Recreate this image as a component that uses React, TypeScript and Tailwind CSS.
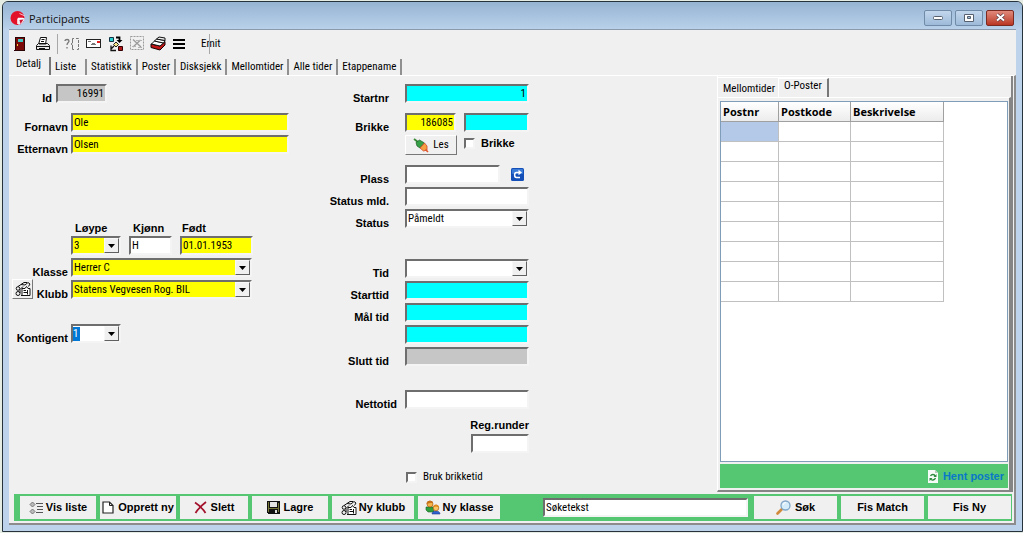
import React from "react";

const ui = "font-['Roboto_Condensed','Liberation_Sans_Narrow','Liberation_Sans',sans-serif] text-[11px] leading-[14px]";
const bold = "font-['Liberation_Sans',sans-serif] text-[11px] leading-[13px] font-bold";
const sunken =
  "border-2 border-t-[#6e6e6e] border-l-[#6e6e6e] border-r-[#f4f4f4] border-b-[#f4f4f4] outline-none rounded-none";

type Tone = "white" | "yellow" | "cyan" | "grey";
const tones: Record<Tone, string> = {
  white: "bg-white",
  yellow: "bg-[#ffff00]",
  cyan: "bg-[#00ffff]",
  grey: "bg-[#c6c6c6]",
};

function Field(props: { id: string; label?: string; tone?: Tone; value?: string; className?: string; right?: boolean }) {
  const { id, label, tone = "white", value = "", className = "w-full", right } = props;
  return (
    <input
      id={id}
      aria-label={label}
      defaultValue={value}
      className={`${ui} ${sunken} ${tones[tone]} h-[19px] min-w-0 px-px text-black ${right ? "text-right" : ""} ${className}`}
    />
  );
}

function Arrow() {
  return (
    <span className="pointer-events-none flex h-[15px] w-[15px] shrink-0 items-center justify-center border border-t-[#f8f8f8] border-l-[#f8f8f8] border-r-[#606060] border-b-[#606060] bg-[#f0f0f0]">
      <svg width="7" height="4" viewBox="0 0 7 4" aria-hidden="true">
        <path d="M0 0h7L3.500 4z" fill="#000" />
      </svg>
    </span>
  );
}

function Combo(props: { id: string; tone?: Tone; value: string; className?: string }) {
  const { id, tone = "white", value, className = "w-full" } = props;
  return (
    <div className={`${sunken} ${tones[tone]} relative flex h-[19px] items-center ${className}`}>
      <select
        id={id}
        defaultValue={value}
        className={`${ui} h-[15px] min-w-0 flex-1 appearance-none bg-transparent pl-px text-black outline-none`}
      >
        <option>{value}</option>
      </select>
      <Arrow />
    </div>
  );
}

function Row(props: { id: string; label?: string; wide?: boolean; children: React.ReactNode }) {
  return (
    <div className="flex items-end gap-2">
      <div className={`flex w-[76px] shrink-0 justify-end ${props.wide ? "" : "pr-2"}`}>
        {props.label && (
          <label htmlFor={props.id} className={`${bold} translate-y-[2px] whitespace-nowrap`}>
            {props.label}
          </label>
        )}
      </div>
      {props.children}
    </div>
  );
}

function LeftRow(props: { id: string; label: string; icon?: React.ReactNode; children: React.ReactNode }) {
  return (
    <div className="flex items-end gap-[3px]">
      <div className={`flex h-[19px] w-14 shrink-0 items-end ${props.icon ? "justify-between" : "justify-end"}`}>
        {props.icon}
        <label htmlFor={props.id} className={`${bold} translate-y-[2px] whitespace-nowrap`}>
          {props.label}
        </label>
      </div>
      {props.children}
    </div>
  );
}

function LogoIcon() {
  return (
    <svg width="16" height="16" viewBox="0 0 16 16" aria-hidden="true">
      <circle cx="7.500" cy="8" r="7" fill="#e3122b" />
      <path d="M8 8h6.500v2L12 13.500 8.500 15z" fill="#e8eef6" />
      <path d="M8 14V8.500M8 8.500h5" stroke="#fff" strokeWidth="1.500" />
      <path d="M9.500 10l4-.5-3 4.500z" fill="#d01530" />
      <path d="M9.500 3.500 15 6" stroke="#f7c6cc" strokeWidth="1" />
    </svg>
  );
}

function DoorIcon() {
  return (
    <svg width="12" height="16" viewBox="0 0 12 16" shapeRendering="crispEdges" aria-hidden="true">
      <path d="M1 1h10v14H1z" fill="#7a0a0a" />
      <path d="M1 1h10v1H1zM1 1h1v14H1zM10 1h1v14h-1zM0 14h11v1H0z" fill="#2b0505" />
      <path d="M4 3h5v3H4z" fill="#3fc9c4" />
      <path d="M3 8h1v2H3z" fill="#f0d040" />
    </svg>
  );
}

function PrinterIcon() {
  return (
    <svg width="16" height="16" viewBox="0 0 16 16" fill="#fff" stroke="#111" aria-hidden="true">
      <path d="M3.500 8.500 5.500 1.500h6l-1 7z" />
      <path d="M6.500 3.500h3M6 5.500h3" />
      <path d="M1.500 9.500l2-2h9l2 2v4h-13z" fill="#e8e8e8" />
      <path d="M1.500 10.500h13M4 12.500h6" fill="none" />
      <path d="M4 8.500h7" stroke="#888" />
    </svg>
  );
}

function HelpBraceIcon() {
  return (
    <svg width="16" height="16" viewBox="0 0 16 16" fill="none" stroke="#777" aria-hidden="true">
      <path d="M1 5c0-2 4-2 4 0 0 1.500-2 1.500-2 4M3 11v1.500" strokeWidth="1.300" />
      <path d="M10 2.500H8.500V7L7 8l1.500 1v4.500H10" />
      <path d="M12 2.500h2.500v11H12" strokeDasharray="3 1" />
    </svg>
  );
}

function MailIcon() {
  return (
    <svg width="16" height="10" viewBox="0 0 16 10" shapeRendering="crispEdges" aria-hidden="true">
      <path d="M.5.500h14v8H.5z" fill="#fff" stroke="#222" />
      <path d="M11 2h3v2h-3z" fill="#e02020" />
      <path d="M2 2h3v1H2zM5 5h5v1H5zM6 4h3v1H6z" fill="#777" />
    </svg>
  );
}

function FlowIcon() {
  return (
    <svg width="16" height="16" viewBox="0 0 16 16" aria-hidden="true">
      <path d="M1.500 1.500h4v4h-4z" fill="#2ad0d0" stroke="#134" />
      <path d="M8 1.500h3.500V5" fill="none" stroke="#000" strokeWidth="1.800" />
      <path d="M8.500 4h6l-3 3z" fill="#000" />
      <path d="M8 6l2.500 2.500L8 11 5.500 8.500z" fill="#f3e48a" stroke="#222" />
      <path d="M6 10l-3 3M3 9.500v5h5" fill="none" stroke="#111" strokeWidth="1.300" />
      <path d="M10.500 10.500h4v4h-4z" fill="#b01818" stroke="#300" />
    </svg>
  );
}

function GreyedIcon() {
  return (
    <svg width="14" height="15" viewBox="0 0 14 15" fill="none" stroke="#9a9a9a" aria-hidden="true">
      <path d="M.5.500h13v13H.5z" strokeDasharray="2 1" />
      <path d="M3 3.500l8 7.500M10.500 4 3 11" strokeWidth="1.300" />
      <path d="M6 4.500h6M2 10.500h4M8 11.500h4" stroke="#b4b4b4" />
    </svg>
  );
}

function CardsIcon() {
  return (
    <svg width="17" height="15" viewBox="0 0 17 15" aria-hidden="true">
      <path d="M1 8l9 2 5-4.500v3.500L10 14 1 11.500z" fill="#c01616" stroke="#160202" />
      <path d="M1.500 8 4.500 5l9 2L10 10z" fill="#fff" stroke="#111" />
      <path d="M4.500 5 6.500 3l8.500 1.500L13.500 7z" fill="#fff" stroke="#111" />
      <path d="M6.500 3 9 1l6 1v2.500z" fill="#eee" stroke="#111" />
    </svg>
  );
}

function LinesIcon() {
  return (
    <svg width="12" height="10" viewBox="0 0 12 10" shapeRendering="crispEdges" aria-hidden="true">
      <path d="M0 0h12v2H0zM0 4h12v2H0zM0 8h12v2H0z" fill="#000" />
    </svg>
  );
}

function ClubIcon() {
  return (
    <svg width="16" height="16" viewBox="0 0 16 16" fill="none" stroke="#111" aria-hidden="true">
      <circle cx="3" cy="12.500" r="2" />
      <circle cx="3" cy="7.500" r="1.800" />
      <path d="M3 5.500 6 3.500l4 .5 3-2.500 2 1.500-1.500 2.500M5 12V8.500L8 5.500M6 3.500 9 1.500h3" />
      <path d="M7 7.500h3l1.500-2 1.500 2h2v7H7z" fill="#fff" />
      <path d="M8.500 9.500H11M8.500 11.500H13M12.500 9v4.500M6 14.500h9" />
    </svg>
  );
}

function ListIcon() {
  return (
    <svg width="15" height="14" viewBox="0 0 15 14" fill="none" stroke="#777" aria-hidden="true">
      <path d="M3.500 1 6 3.500 3.500 6 1 3.500zM3.500 8 6 10.500 3.500 13 1 10.500z" fill="#bbb" />
      <path d="M7 2.500h7M8 5.500h6M8 8.500h6M7 11.500h7" stroke="#555" />
    </svg>
  );
}

function PageIcon() {
  return (
    <svg width="12" height="13" viewBox="0 0 12 13" aria-hidden="true">
      <path d="M1 1h6.500L11 4.500V12H1z" fill="#fff" stroke="#222" strokeWidth="1.200" />
      <path d="M7.500 1v3.500H11" fill="none" stroke="#222" />
    </svg>
  );
}

function CrossIcon() {
  return (
    <svg width="13" height="13" viewBox="0 0 13 13" fill="none" stroke="#a3122c" aria-hidden="true">
      <path d="M1 1.500C5 4 9 8 11.500 12M12 1C8 4 4 8 1.500 12" strokeWidth="1.800" />
    </svg>
  );
}

function DiskIcon() {
  return (
    <svg width="13" height="13" viewBox="0 0 13 13" shapeRendering="crispEdges" aria-hidden="true">
      <path d="M0 0h13v13H1L0 12z" fill="#111" />
      <path d="M1 1h1v10H1zM11 2h1v9h-1zM2 7h9v1H2z" fill="#77773a" />
      <path d="M3 1h7v5H3z" fill="#e4e4e4" />
      <path d="M8 9h2v3H8z" fill="#ddd" />
    </svg>
  );
}

function PeopleIcon() {
  return (
    <svg width="16" height="15" viewBox="0 0 16 15" aria-hidden="true">
      <path d="M1 7h7l1 5H3L1 10z" fill="#2f9e3c" stroke="#17602a" strokeWidth=".6" />
      <circle cx="5" cy="4" r="3" fill="#f5b54a" stroke="#a75a10" strokeWidth=".7" />
      <path d="M1.500 4c0-4 6-4 6.500-1L5 3z" fill="#c9701a" />
      <path d="M7 14c0-4 8-4 8 0z" fill="#2f62d0" stroke="#1b3a8a" strokeWidth=".6" />
      <circle cx="11" cy="8" r="2.800" fill="#f8c566" stroke="#a75a10" strokeWidth=".7" />
      <path d="M8 7.500c0-4 6-4 6 0l-3-1z" fill="#e08a1c" />
    </svg>
  );
}

function MagnifierIcon() {
  return (
    <svg width="15" height="15" viewBox="0 0 15 15" aria-hidden="true">
      <path d="M6 9 1.500 13.500" stroke="#d08a3c" strokeWidth="2.600" strokeLinecap="round" />
      <circle cx="9.500" cy="5.500" r="4.500" fill="#d5ecfa" stroke="#7fa6c8" strokeWidth="1.300" />
      <path d="M7 5a3 3 0 0 1 3-2.500" fill="none" stroke="#fff" />
    </svg>
  );
}

function PlugIcon() {
  return (
    <svg width="16" height="15" viewBox="0 0 16 15" aria-hidden="true">
      <path d="M1 1l4 3" stroke="#3b8a3a" strokeWidth="1.800" />
      <path d="M3 4.500 6.500 2l5 3-4.500 5-3-2z" fill="#35a046" stroke="#1e5f2a" strokeWidth=".7" />
      <path d="M7 10l4.500-5 2.500 3v4l-3.500 1z" fill="#f5a040" stroke="#d0442a" strokeWidth=".8" />
      <path d="M12.500 11.500l2.500 2.500" stroke="#e0552a" strokeWidth="1.600" />
    </svg>
  );
}

function RefreshDocIcon() {
  return (
    <svg width="10" height="13" viewBox="0 0 10 13" aria-hidden="true">
      <path d="M0 0h7l3 3v10H0z" fill="#f7fbf7" />
      <path d="M7 0v3h3z" fill="#b9c9bd" />
      <path d="M2.500 6c1-2 4-2 4.500 0M7.500 8c-1 2.500-4 2.500-5 1" fill="none" stroke="#2c8a3d" strokeWidth="1.300" />
      <path d="M8.500 4v3H5.500zM1.500 11V8h3z" fill="#2c8a3d" />
    </svg>
  );
}

function BlueArrowIcon() {
  return (
    <svg width="13" height="13" viewBox="0 0 13 13" aria-hidden="true">
      <rect width="13" height="13" rx="1.500" fill="#1450b8" />
      <rect x="1" y="1" width="11" height="5" rx="1" fill="#3b7bd8" />
      <path d="M8 4.500H5.500C3 4.500 3 9.500 5.500 9.500H9" fill="none" stroke="#fff" strokeWidth="1.500" />
      <path d="M7.500 1.800 11 4.500 7.500 7.200z" fill="#fff" />
    </svg>
  );
}

const tabs = ["Liste", "Statistikk", "Poster", "Disksjekk", "Mellomtider", "Alle tider", "Etappename"];
const tools = [
  { name: "Hjelp", icon: <HelpBraceIcon /> },
  { name: "E-post", icon: <MailIcon /> },
  { name: "Flyt", icon: <FlowIcon /> },
  { name: "Koble fra", icon: <GreyedIcon /> },
  { name: "Kort", icon: <CardsIcon /> },
  { name: "Linjer", icon: <LinesIcon /> },
];

function BarButton(props: { icon?: React.ReactNode; className: string; children: React.ReactNode }) {
  return (
    <button
      type="button"
      className={`${bold} flex h-[23px] shrink-0 items-center justify-center whitespace-nowrap bg-[#f0f0f0] ${props.className}`}
    >
      {props.icon}
      {props.children}
    </button>
  );
}

function TitleBar() {
  const button = "flex h-4 w-7 items-center justify-center rounded-[2px] border";
  return (
    <header className="flex h-[27px] items-center bg-linear-to-b from-[#96b4d3] to-[#b9d1ea] pr-2 pl-[7px]">
      <span className="pt-1">
        <LogoIcon />
      </span>
      <h1 className="ml-[3px] flex-1 pt-[6px] font-['Open_Sans','Noto_Sans',sans-serif] text-[11px] leading-4 text-[#111]">
        Participants
      </h1>
      <div className="flex gap-[3px] pt-1">
        <button type="button" aria-label="Minimize" className={`${button} border-[#6f8ba8] bg-linear-to-b from-[#c3d7ec] to-[#9dbad9]`}>
          <svg width="12" height="6" viewBox="0 0 12 6" aria-hidden="true">
            <rect x="1.500" y="1.500" width="9" height="3" rx="1" fill="#fff" stroke="#56606e" />
          </svg>
        </button>
        <button type="button" aria-label="Maximize" className={`${button} border-[#6f8ba8] bg-linear-to-b from-[#c3d7ec] to-[#9dbad9]`}>
          <svg width="10" height="8" viewBox="0 0 10 8" aria-hidden="true">
            <path d="M.5.500h9v7h-9z" fill="#fff" stroke="#56606e" />
            <path d="M3.500 2.500h3v2h-3z" fill="#9dbad9" stroke="#56606e" />
          </svg>
        </button>
        <button type="button" aria-label="Close" className={`${button} border-[#7b2a22] bg-linear-to-b from-[#e08a7c] to-[#b93421]`}>
          <svg width="11" height="9" viewBox="0 0 11 9" aria-hidden="true">
            <path d="M2 1.500l7 6M9 1.500l-7 6" stroke="#5a3a44" strokeWidth="3.400" />
            <path d="M2 1.500l7 6M9 1.500l-7 6" stroke="#fff" strokeWidth="2" />
          </svg>
        </button>
      </div>
    </header>
  );
}

function PersonForm() {
  return (
    <form className="flex w-[277px] shrink-0 flex-col gap-[3px] pt-2">
      <div className="flex items-end gap-1 pb-[7px]">
        <div className="flex w-10 justify-end">
          <label htmlFor="id" className={`${bold} translate-y-[2px]`}>Id</label>
        </div>
        <Field id="id" tone="grey" value="16991" right className="w-[51px]" />
      </div>
      <LeftRow id="fornavn" label="Fornavn"><Field id="fornavn" tone="yellow" value="Ole" /></LeftRow>
      <LeftRow id="etternavn" label="Etternavn"><Field id="etternavn" tone="yellow" value="Olsen" /></LeftRow>
      <div className="flex gap-2 pt-[65px] pl-[59px]">
        <div className="flex w-[50px] flex-col gap-px">
          <label htmlFor="loype" className={`${bold} pl-1`}>Løype</label>
          <Combo id="loype" tone="yellow" value="3" />
        </div>
        <div className="flex w-[43px] flex-col gap-px">
          <label htmlFor="kjonn" className={`${bold} pl-1`}>Kjønn</label>
          <Field id="kjonn" value="H" />
        </div>
        <div className="flex w-[73px] flex-col gap-px">
          <label htmlFor="fodt" className={`${bold} pl-[2px]`}>Født</label>
          <Field id="fodt" tone="yellow" value="01.01.1953" />
        </div>
      </div>
      <LeftRow id="klasse" label="Klasse"><Combo id="klasse" tone="yellow" value="Herrer C" className="w-[181px]" /></LeftRow>
      <LeftRow
        id="klubb"
        label="Klubb"
        icon={
          <button type="button" aria-label="Velg klubb" className="flex h-5 w-[21px] shrink-0 items-center justify-center border border-t-white border-l-white border-r-[#777] border-b-[#777] bg-[#f0f0f0]">
            <ClubIcon />
          </button>
        }
      >
        <Combo id="klubb" tone="yellow" value="Statens Vegvesen Rog. BIL" className="w-[181px]" />
      </LeftRow>
      <div className="pt-[22px]">
        <LeftRow id="kontigent" label="Kontigent">
          <div className={`${sunken} flex h-[19px] w-[50px] items-center justify-between bg-white`}>
            <input id="kontigent" defaultValue="1" className={`${ui} h-[14px] w-[7px] bg-[#0078d7] text-white outline-none`} />
            <Arrow />
          </div>
        </LeftRow>
      </div>
    </form>
  );
}

function RaceForm() {
  return (
    <form className="flex w-[208px] shrink-0 flex-col gap-[3px] pt-2">
      <Row id="startnr" label="Startnr"><Field id="startnr" tone="cyan" value="1" right /></Row>
      <div className="pt-[7px]">
        <Row id="brikke" label="Brikke">
          <Field id="brikke" tone="yellow" value="186085" right className="w-[51px]" />
          <Field id="brikke2" label="Brikke 2" tone="cyan" className="w-[65px]" />
        </Row>
      </div>
      <div className="flex gap-[7px] pl-[84px]">
        <button
          type="button"
          className={`${ui} flex h-5 w-[52px] shrink-0 items-center justify-center gap-1 border border-t-white border-l-white border-r-[#777] border-b-[#777] bg-[#f0f0f0]`}
        >
          <PlugIcon />
          Les
        </button>
        <label className={`${bold} flex h-4 items-center gap-[6px]`}>
          <input type="checkbox" className={`${sunken} h-[11px] w-[11px] appearance-none bg-white`} />
          Brikke
        </label>
      </div>
      <div className="pt-[7px]">
        <Row id="plass" label="Plass">
          <Field id="plass" className="w-[95px]" />
          <button type="button" aria-label="Oppdater plass" className="ml-[3px] shrink-0 self-center">
            <BlueArrowIcon />
          </button>
        </Row>
      </div>
      <Row id="statusmld" label="Status mld."><Field id="statusmld" /></Row>
      <Row id="status" label="Status"><Combo id="status" value="Påmeldt" /></Row>
      <div className="pt-7"><Row id="tid" label="Tid"><Combo id="tid" value="" /></Row></div>
      <Row id="starttid" label="Starttid"><Field id="starttid" tone="cyan" /></Row>
      <Row id="maltid" label="Mål tid"><Field id="maltid" tone="cyan" /></Row>
      <Row id="maltid2"><Field id="maltid2" label="Mål tid 2" tone="cyan" /></Row>
      <Row id="slutttid" label="Slutt tid"><Field id="slutttid" tone="grey" /></Row>
      <div className="pt-[21px]"><Row id="nettotid" label="Nettotid" wide><Field id="nettotid" /></Row></div>
      <div className="flex flex-col items-end gap-[2px] pt-[7px]">
        <label htmlFor="runder" className={bold}>Reg.runder</label>
        <Field id="runder" className="w-[58px]" />
      </div>
      <label className={`${ui} flex items-center gap-[6px] pt-[14px] pl-[85px]`}>
        <input type="checkbox" className={`${sunken} h-[11px] w-[11px] appearance-none bg-white`} />
        Bruk brikketid
      </label>
    </form>
  );
}

function PostsPanel() {
  const cell = "border-r border-b border-[#c0c0c0]";
  const head = "h-5 border-r border-b border-[#a0a0a0] bg-linear-to-b from-white to-[#ececec] pl-[2px] text-left font-['Open_Sans','Noto_Sans',sans-serif] text-[11px] leading-4 font-bold";
  return (
    <aside className="flex w-[296px] shrink-0 flex-col border-r-2 border-b-2 border-r-[#858585] border-b-[#858585] border-l border-l-white pt-px">
      <div role="tablist" className={`${ui} flex h-5 items-end border-t border-white pl-[2px]`}>
        <button role="tab" type="button" className="h-[17px] px-[3px]">Mellomtider</button>
        <button role="tab" type="button" aria-selected="true" className="h-[19px] border-t border-r-2 border-l border-t-white border-r-[#777] border-l-white px-[5px] pb-1">
          O-Poster
        </button>
      </div>
      <div className="flex flex-1 flex-col gap-[2px] border-t border-r-2 border-t-white border-r-[#858585] pt-[3px] pr-px pb-[2px] pl-[2px]">
        <div className="flex-1 border border-[#7f9db9] bg-white">
          <table className="w-[223px] table-fixed border-separate border-spacing-0">
            <colgroup>
              <col className="w-[58px]" />
              <col className="w-[72px]" />
              <col className="w-[93px]" />
            </colgroup>
            <thead>
              <tr>
                <th className={head}>Postnr</th>
                <th className={head}>Postkode</th>
                <th className={head}>Beskrivelse</th>
              </tr>
            </thead>
            <tbody>
              {Array.from({ length: 9 }, (_, i) => (
                <tr key={i} className="h-5">
                  <td className={`${cell} ${i === 0 ? "bg-[#b4c8e8]" : ""}`} />
                  <td className={cell} />
                  <td className={cell} />
                </tr>
              ))}
            </tbody>
          </table>
        </div>
        <div className="flex h-6 items-center justify-end bg-[#55c672] pr-1">
          <button type="button" className={`${bold} flex items-center gap-[5px] text-[#0a78c8]`}>
            <RefreshDocIcon />
            Hent poster
          </button>
        </div>
      </div>
    </aside>
  );
}

export default function App() {
  return (
    <div className="flex min-h-screen bg-[#e4ece4] pt-px pr-0 pb-px pl-[2px] text-black">
      <div className="flex flex-1 flex-col overflow-hidden rounded-t-[6px] border border-[#26323c] bg-[#bdd2eb]">
        <TitleBar />
        <div className="mr-[6px] mb-[6px] ml-[6px] flex flex-1 flex-col border-t border-[#8a9aac] bg-[#f0f0f0]">
          <div role="toolbar" className="flex h-[27px] items-center pl-[5px]">
            <button type="button" aria-label="Avslutt"><DoorIcon /></button>
            <button type="button" aria-label="Skriv ut" className="ml-[9px]"><PrinterIcon /></button>
            <span className="mx-[6px] h-5 w-px bg-[#a8a8a8]" />
            <div className="flex items-center gap-[6px]">
              {tools.map((t) => (
                <button key={t.name} type="button" aria-label={t.name}>{t.icon}</button>
              ))}
            </div>
            <div className={`${ui} relative ml-4`}>
              Emit
              <span className="absolute -top-[3px] left-2 h-5 w-px bg-[#a8a8a8]" />
            </div>
          </div>
          <div role="tablist" className={`${ui} flex h-[18px] items-end`}>
            <button role="tab" type="button" aria-selected="true" className="h-[18px] w-[42px] border-r-2 border-[#777] pr-px pb-1 text-center">
              Detalj
            </button>
            {tabs.map((t) => (
              <button key={t} role="tab" type="button" className="h-4 min-w-9 border-r-2 border-[#909090] px-1 pb-px text-left">{t}</button>
            ))}
          </div>
          <main className="flex flex-1 flex-col border-t border-r-2 border-b-2 border-t-white border-r-[#8c8c8c] border-b-[#8c8c8c]">
            <div className="flex flex-1 pr-px pl-[3px]">
              <PersonForm />
              <div className="w-8 shrink-0" />
              <RaceForm />
              <div className="flex-1" />
              <PostsPanel />
            </div>
            <footer className="mt-[2px] mr-[2px] mb-[2px] ml-[5px] flex items-center gap-1 bg-[#55c672] py-[2px] pr-px pl-[6px]">
              <BarButton icon={<ListIcon />} className="w-[76px] gap-[2px]">Vis liste</BarButton>
              <BarButton icon={<PageIcon />} className="w-[76px] gap-1">Opprett ny</BarButton>
              <BarButton icon={<CrossIcon />} className="w-[68px] gap-1">Slett</BarButton>
              <BarButton icon={<DiskIcon />} className="w-[76px] gap-1">Lagre</BarButton>
              <BarButton icon={<ClubIcon />} className="w-[82px] gap-[2px]">Ny klubb</BarButton>
              <BarButton icon={<PeopleIcon />} className="w-[82px] gap-[2px]">Ny klasse</BarButton>
              <div className="flex-1" />
              <Field id="search" label="Søketekst" value="Søketekst" className="w-[205px]" />
              <BarButton icon={<MagnifierIcon />} className="ml-[2px] w-[83px] gap-1">Søk</BarButton>
              <BarButton className="w-[83px]">Fis Match</BarButton>
              <BarButton className="w-[83px]">Fis Ny</BarButton>
            </footer>
          </main>
        </div>
      </div>
    </div>
  );
}
